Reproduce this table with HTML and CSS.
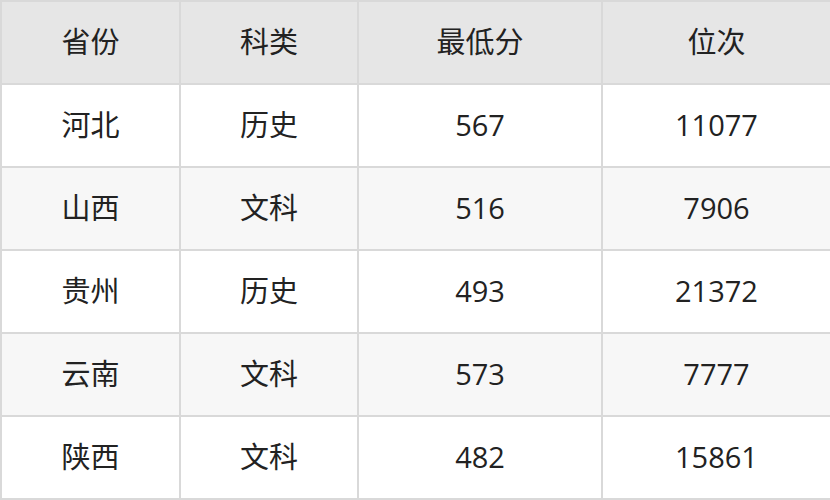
FILE: index.html
```html
<!DOCTYPE html>
<html lang="zh">
<head>
<meta charset="utf-8">
<link rel="stylesheet" href="styles.css">
</head>
<body>
<table class="score-table">
  <colgroup>
    <col class="c1"><col class="c2"><col class="c3"><col class="c4">
  </colgroup>
  <thead>
    <tr><th>省份</th><th>科类</th><th>最低分</th><th>位次</th></tr>
  </thead>
  <tbody>
    <tr><td>河北</td><td>历史</td><td>567</td><td>11077</td></tr>
    <tr class="alt"><td>山西</td><td>文科</td><td>516</td><td>7906</td></tr>
    <tr><td>贵州</td><td>历史</td><td>493</td><td>21372</td></tr>
    <tr class="alt"><td>云南</td><td>文科</td><td>573</td><td>7777</td></tr>
    <tr><td>陕西</td><td>文科</td><td>482</td><td>15861</td></tr>
  </tbody>
</table>
</body>
</html>
```
FILE: styles.css
```css
html, body {
  margin: 0;
  padding: 0;
  background: #ffffff;
}
.score-table {
  width: 830px;
  height: 500px;
  border-collapse: collapse;
  table-layout: fixed;
  font-family: "Open Sans", "Noto Sans CJK SC", sans-serif;
  font-size: 29px;
  line-height: 1;
  color: #222222;
}
.c1 { width: 179px; }
.c2 { width: 178px; }
.c3 { width: 244px; }
.c4 { width: 229px; }
.score-table th,
.score-table td {
  border: 2px solid #d9d9d9;
  text-align: center;
  vertical-align: middle;
  height: 79px;
  padding: 0 0 2px 0;
  font-weight: normal;
}
.score-table th {
  background: #e6e6e6;
}
.score-table tr.alt td {
  background: #f7f7f7;
}
```
